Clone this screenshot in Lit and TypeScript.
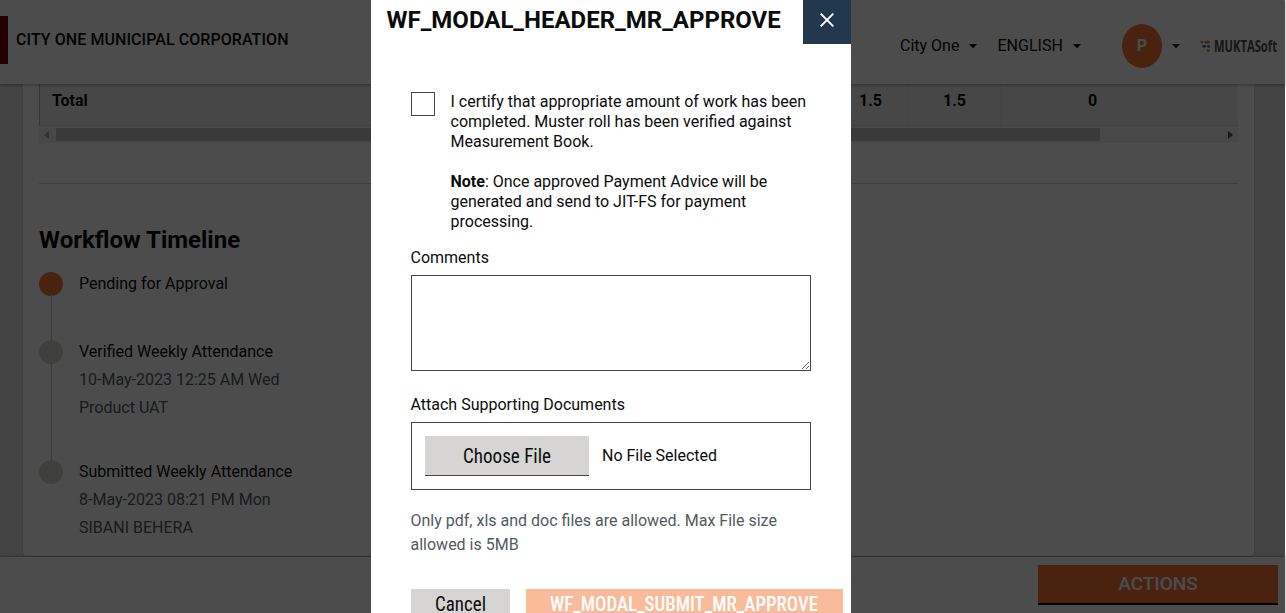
import { LitElement, html, css } from "lit";
import { customElement } from "lit/decorators.js";

interface Step {
  title: string;
  lines: string[];
  active?: boolean;
}

const STEPS: Step[] = [
  { title: "Pending for Approval", lines: [], active: true },
  { title: "Verified Weekly Attendance", lines: ["10-May-2023 12:25 AM Wed", "Product UAT"] },
  { title: "Submitted Weekly Attendance", lines: ["8-May-2023 08:21 PM Mon", "SIBANI BEHERA"] },
];

const caret = html`<svg class="caret" width="8" height="5" viewBox="0 0 8 5"><path d="M0 0h8L4 4.5z" fill="#0b0c0c" /></svg>`;

@customElement("top-bar")
class TopBar extends LitElement {
  static styles = css`
    :host {
      display: flex;
      align-items: center;
      height: 84px;
      box-sizing: border-box;
      background: #fff;
      box-shadow: 0 1px 3px rgba(0, 0, 0, 0.35);
      color: #0b0c0c;
      position: relative;
      z-index: 1;
    }
    .mark { width: 8px; height: 48px; margin-top: -4px; background: #7a0000; }
    .name { flex: 1; margin: -5px 0 0 8px; font-weight: 500; font-size: 16px; line-height: 24px; letter-spacing: 0.07px; }
    .menu { display: flex; align-items: center; height: 24px; margin-top: 7px; }
    .city { width: 97.5px; }
    .lang { width: 124.5px; }
    .menu .caret { margin-left: 10px; }
    .caret { margin-top: 1px; }
    .avatar {
      width: 40px; height: 44px; margin: 8px 10px 0 0; border-radius: 50%;
      background: #f47738; color: #fff; font-weight: 700; font-size: 16px;
      display: flex; align-items: center; justify-content: center;
    }
    .avatar-caret { display: flex; margin: 8px 20px 0 0; }
    .brand { display: block; margin: 8px 7px 0 0; overflow: visible; }
    .word { font: 700 16px "Open Sans", sans-serif; }
  `;
  render() {
    return html`
      <div class="mark"></div>
      <div class="name">CITY ONE MUNICIPAL CORPORATION</div>
      <div class="menu city">City One ${caret}</div>
      <div class="menu lang">ENGLISH ${caret}</div>
      <div class="avatar">P</div>
      <div class="avatar-caret">${caret}</div>
      <svg class="brand" width="78" height="18" viewBox="0 0 78 18">
        <circle cx="1.8" cy="5.2" r="1.4" fill="#f47738" />
        <rect x="4.4" y="3.8" width="5.4" height="2.8" rx="1.4" fill="#f47738" />
        <rect x="2.4" y="7.9" width="3.8" height="2.8" rx="1.4" fill="#1c86c8" />
        <circle cx="8.6" cy="9.3" r="1.5" fill="#1c86c8" />
        <circle cx="8.3" cy="13.6" r="1.5" fill="#7cb342" />
        <text class="word" x="14" y="15" textLength="63" lengthAdjust="spacingAndGlyphs" fill="#4a4a4a">MUKTASoft</text>
      </svg>
    `;
  }
}

@customElement("timeline-view")
class TimelineView extends LitElement {
  static styles = css`
    :host { display: block; color: #0b0c0c; }
    .step { display: flex; gap: 16px; }
    .rail { width: 24px; display: flex; flex-direction: column; align-items: center; }
    .dot { width: 24px; height: 24px; border-radius: 50%; background: #d6d5d4; flex: none; }
    .dot.active { background: #f47738; }
    .line { width: 1px; flex: 1; margin: -2px 0 0 1px; background: #c8cacb; }
    .body { padding-bottom: 40px; line-height: 24px; }
    .first .body { padding-bottom: 44px; }
    .sub { margin-top: 4px; color: #505a5f; }
  `;
  render() {
    return html`${STEPS.map(
      (s, i) => html`<div class="step ${i === 0 ? "first" : ""}">
        <div class="rail">
          <div class="dot ${s.active ? "active" : ""}"></div>
          ${i < STEPS.length - 1 ? html`<div class="line"></div>` : ""}
        </div>
        <div class="body">
          <div>${s.title}</div>
          ${s.lines.map((l) => html`<div class="sub">${l}</div>`)}
        </div>
      </div>`
    )}`;
  }
}

@customElement("approve-modal")
class ApproveModal extends LitElement {
  static styles = css`
    :host { display: block; width: 480px; height: 613px; overflow: hidden; background: #fff; color: #0b0c0c; }
    .head { display: flex; justify-content: space-between; height: 44px; padding-left: 15.5px; }
    h1 { margin: 0; font-size: 24px; font-weight: 700; line-height: 40px; white-space: nowrap; }
    .close { width: 48px; height: 44px; background: #22394d; display: flex; align-items: center; justify-content: center; padding-bottom: 4px; box-sizing: border-box; }
    .content { padding: 48px 40px 0; }
    .certify { display: flex; gap: 15.5px; line-height: 20px; }
    .box { width: 24px; height: 24px; flex: none; box-sizing: border-box; border: 1px solid #464646; }
    p { margin: 0 0 20px; }
    p:last-child { margin: 0; }
    .text { width: 360px; }
    b { font-weight: 700; }
    .label { line-height: 20px; }
    .comments { margin: 16px 0 7px -0.5px; }
    textarea { display: block; width: 400px; height: 96px; box-sizing: border-box; border: 1px solid #464646; border-radius: 0; margin: 0; background: #fff; outline: 0; }
    .attach { margin: 24px 0 7px -0.5px; }
    .file { display: flex; align-items: center; gap: 13px; height: 68px; box-sizing: border-box; border: 1px solid #464646; padding-left: 13px; }
    .choose { width: 164px; height: 40px; box-sizing: border-box; background: #d6d5d4; border-bottom: 1px solid #464646; display: flex; align-items: center; justify-content: center; }
    .cond { display: block; overflow: visible; font-family: "Roboto Condensed", Roboto, sans-serif; font-stretch: 75%; font-size: 19.5px; }
    .hint { margin: 19px 0 0 -0.5px; line-height: 24px; color: #505a5f; }
    .actions { display: flex; gap: 16px; margin-top: 32px; width: 432px; }
    .btn { height: 40px; flex: none; display: flex; align-items: flex-start; justify-content: center; }
    .cancel { width: 99px; background: #d6d5d4; }
    .submit { width: 317px; background: #fabb9b; }
    .submit .cond { font-weight: 500; }
  `;
  render() {
    return html`
      <div class="head">
        <h1>WF_MODAL_HEADER_MR_APPROVE</h1>
        <div class="close">
          <svg width="14" height="14" viewBox="0 0 14 14"><path d="M.7.7l12.6 12.6M13.3.7L.7 13.3" stroke="#fff" stroke-width="1.9" /></svg>
        </div>
      </div>
      <div class="content">
        <div class="certify">
          <div class="box"></div>
          <div class="text">
            <p>I certify that appropriate amount of work has been completed. Muster roll has been verified against Measurement Book.</p>
            <p><b>Note</b>: Once approved Payment Advice will be generated and send to JIT-FS for payment processing.</p>
          </div>
        </div>
        <div class="label comments">Comments</div>
        <textarea></textarea>
        <div class="label attach">Attach Supporting Documents</div>
        <div class="file">
          <div class="choose">
            <svg class="cond" width="88" height="26"><text x="0" y="19.5" textLength="88" lengthAdjust="spacingAndGlyphs" fill="#0b0c0c">Choose File</text></svg>
          </div>
          <span>No File Selected</span>
        </div>
        <div class="hint">Only pdf, xls and doc files are allowed. Max File size allowed is 5MB</div>
        <div class="actions">
          <div class="btn cancel">
            <svg class="cond" width="51" height="30"><text x="0" y="22" textLength="51" lengthAdjust="spacingAndGlyphs" fill="#0b0c0c">Cancel</text></svg>
          </div>
          <div class="btn submit">
            <svg class="cond" width="269" height="30"><text x="0" y="22" textLength="268" lengthAdjust="spacingAndGlyphs" fill="#fff">WF_MODAL_SUBMIT_MR_APPROVE</text></svg>
          </div>
        </div>
      </div>
    `;
  }
}

@customElement("app-root")
class AppRoot extends LitElement {
  static styles = css`
    :host { display: block; width: 1286px; height: 613px; background: #fff; overflow: hidden; position: relative; font: 400 16px/24px Roboto, sans-serif; }
    .page { width: 1285px; height: 613px; display: flex; flex-direction: column; background: #e3e3e3; }
    .main { flex: 1; min-height: 0; padding: 0 31px 1px 23px; }
    .card { height: 100%; box-sizing: border-box; background: #fff; border-radius: 0 0 4px 4px; box-shadow: 0 1px 2px rgba(0, 0, 0, 0.2); padding: 0 16px; }
    .row { display: grid; grid-template-columns: 793px 76px 92px 1fr; height: 42px; box-sizing: border-box; background: #eee; border-left: 1px solid #b1b4b6; border-bottom: 1px solid #d6d5d4; font-weight: 700; color: #0b0c0c; }
    .cell { border-right: 1px solid #e2e2e2; text-align: center; line-height: 34px; }
    .cell:last-child { border: 0; padding-right: 54px; }
    .total { text-align: left; padding-left: 12px; }
    .scroll { display: flex; align-items: center; height: 17px; background: #f1f1f1; padding: 0 5px; }
    .thumb { width: 1044px; height: 13px; margin: 0 auto 0 7px; background: #c1c1c1; }
    hr { border: 0; height: 1px; margin: 40px 0; background: #d6d5d4; }
    h2 { margin: 0 0 16px; font-size: 24px; font-weight: 700; line-height: 32px; color: #0b0c0c; }
    .foot { height: 56px; display: flex; justify-content: flex-end; box-sizing: border-box; padding: 8px 7px 0 0; background: #fff; box-shadow: 0 0 3px rgba(0, 0, 0, 0.4); position: relative; }
    .action { width: 240px; height: 40px; box-sizing: border-box; border-bottom: 2px solid #0b0c0c; background: #f47738; color: #fff; text-align: center; font-size: 19px; font-weight: 500; line-height: 38px; }
    .overlay { position: absolute; inset: 0 1px 0 0; z-index: 2; background: rgba(0, 0, 0, 0.7); display: flex; justify-content: center; padding-right: 63px; }
  `;
  render() {
    return html`
      <div class="page">
        <top-bar></top-bar>
        <div class="main">
          <div class="card">
            <div class="row">
              <div class="cell total">Total</div>
              <div class="cell">1.5</div>
              <div class="cell">1.5</div>
              <div class="cell">0</div>
            </div>
            <div class="scroll">
              <svg width="5" height="8"><path d="M5 0v8L0 4z" fill="#a3a3a3" /></svg>
              <div class="thumb"></div>
              <svg width="5" height="8"><path d="M0 0v8l5-4z" fill="#505050" /></svg>
            </div>
            <hr />
            <h2>Workflow Timeline</h2>
            <timeline-view></timeline-view>
          </div>
        </div>
        <div class="foot"><div class="action">ACTIONS</div></div>
      </div>
      <div class="overlay"><approve-modal></approve-modal></div>
    `;
  }
}
